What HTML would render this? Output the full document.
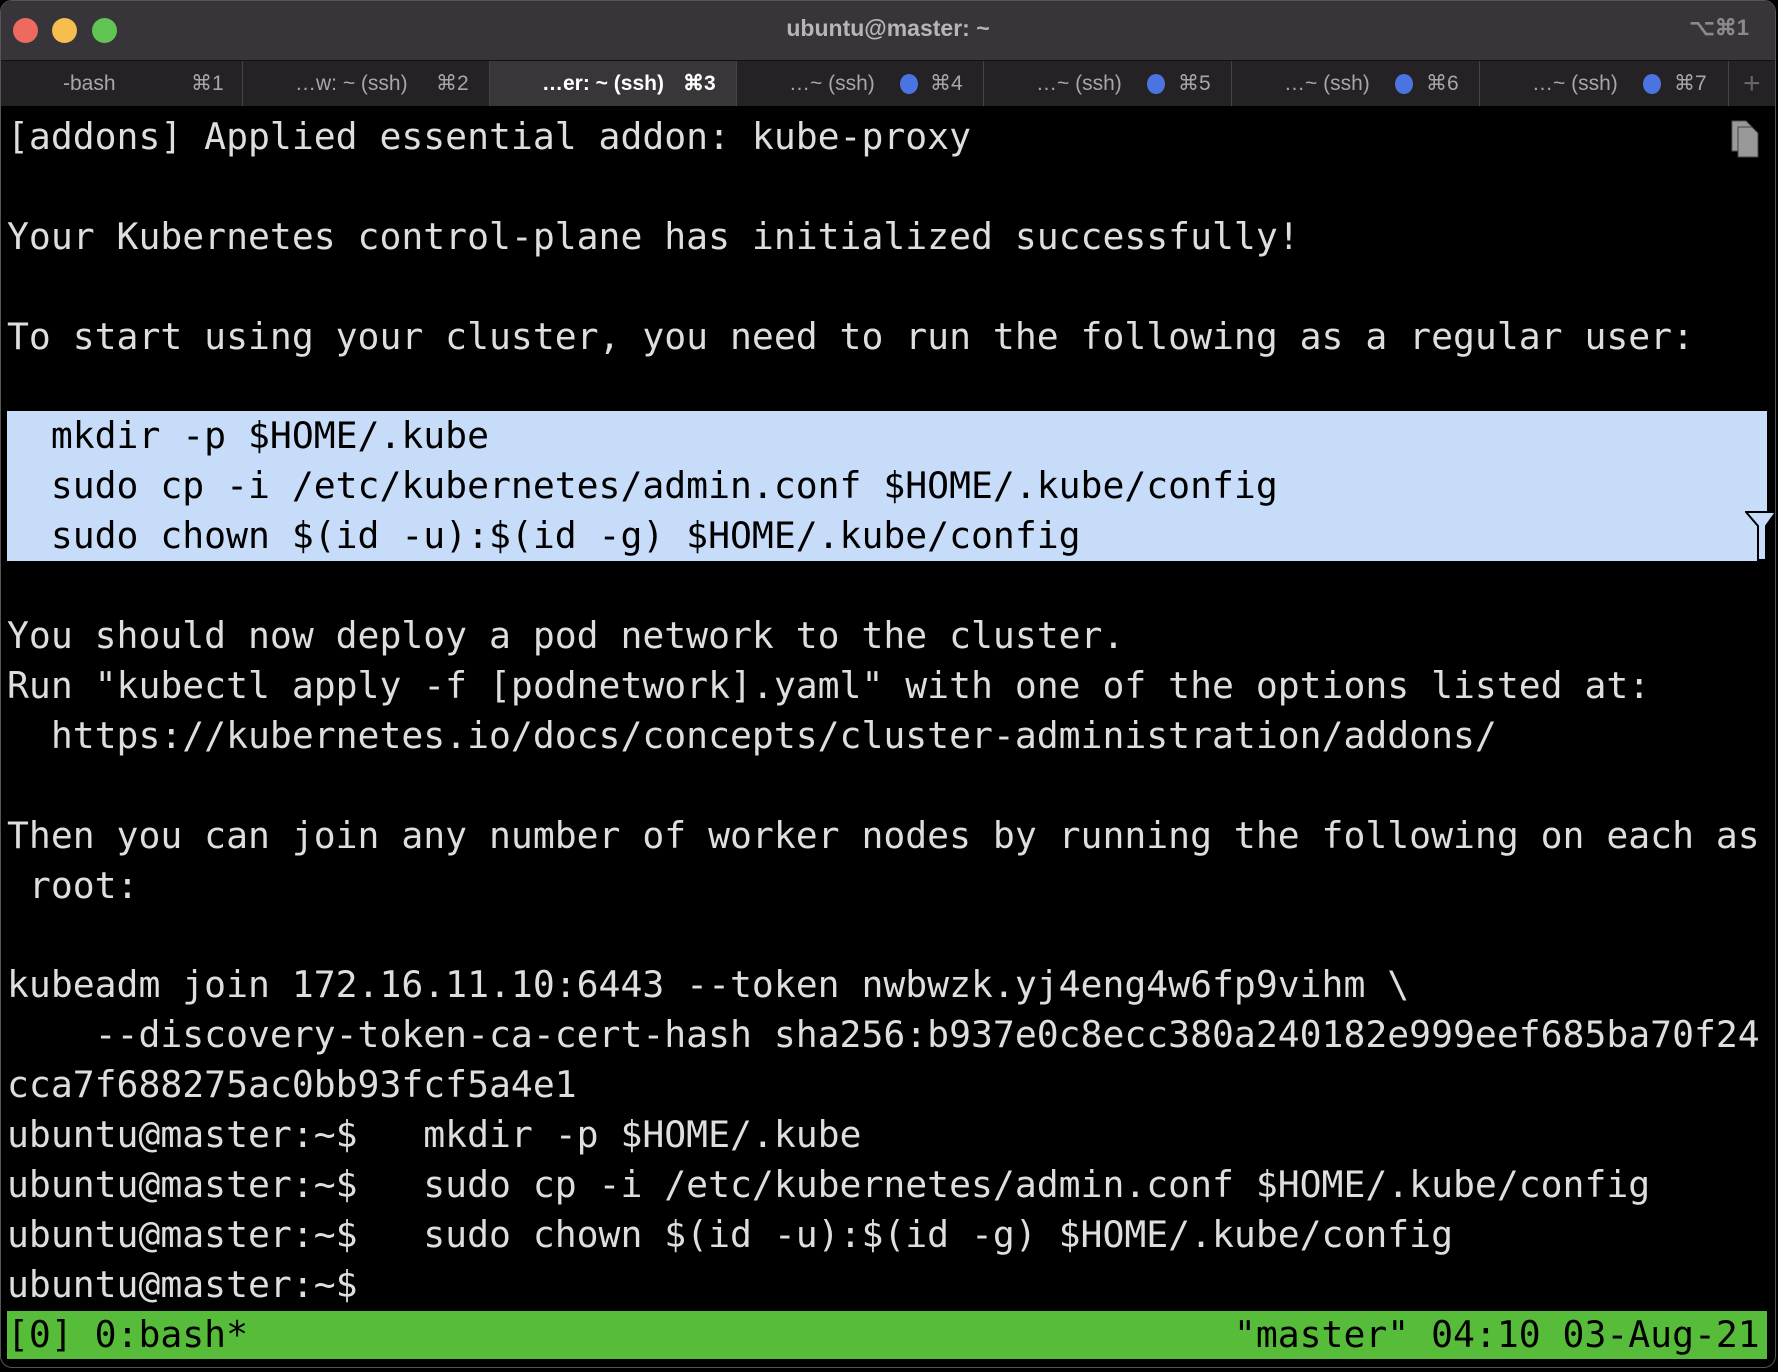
<!DOCTYPE html>
<html><head><meta charset="utf-8"><style>
html,body{margin:0;padding:0;width:1778px;height:1372px;background:#000;overflow:hidden}
.win{position:absolute;left:0;top:0;width:1774px;height:1366px;background:#000;border:1px solid #555;border-radius:12px;overflow:hidden}
.title{position:absolute;left:0;top:0;width:100%;height:59px;background:#38353a}
.dot{position:absolute;top:17px;width:25px;height:25px;border-radius:50%}
.ttext{position:absolute;left:0;width:100%;top:14px;text-align:center;font:bold 23px "Liberation Sans",sans-serif;color:#b8b5b9}
.kb{position:absolute;right:26px;top:14px;font:bold 22px "Liberation Sans",sans-serif;color:#8c898d}
.tabs{position:absolute;left:0;top:59px;width:100%;height:45px;background:#242225;border-top:1px solid #111}
.tab{position:absolute;top:0;height:45px;border-left:1px solid #444;font:21px "Liberation Sans",sans-serif;color:#a9a6aa;line-height:45px;box-sizing:border-box}
.tab.act{background:#39363a;color:#fff;font-weight:bold}
.tab span{position:absolute}
.bd{display:inline-block;width:18px;height:20px;border-radius:50%;background:#4a74e0;position:absolute;top:13px}
.term{position:absolute;left:6px;top:111px;font-family:"DejaVu Sans Mono","Liberation Mono",monospace;font-size:36.4px;line-height:49.9px;color:#dedede;white-space:pre;letter-spacing:0}
.hl{position:absolute;left:6px;top:410px;width:1760px;height:150px;background:#c6dcf8}
.status{position:absolute;left:6px;top:1310px;width:1760px;height:48px;background:#58bc3b}
</style></head><body>
<div class="win">
<div class="title">
<div class="dot" style="left:12px;background:#ee6a5f"></div>
<div class="dot" style="left:51px;background:#f5be4f"></div>
<div class="dot" style="left:91px;background:#61c554"></div>
<div class="ttext">ubuntu@master: ~</div>
<div class="kb">⌥⌘1</div>
</div>
<div class="tabs">
<div class="tab" style="left:0;width:241px;border-left:none"><span style="left:62px">-bash</span><span style="left:190px">⌘1</span></div>
<div class="tab" style="left:241px;width:247px"><span style="left:52px">…w: ~ (ssh)</span><span style="left:193px">⌘2</span></div>
<div class="tab act" style="left:488px;width:247px"><span style="left:52px">…er: ~ (ssh)</span><span style="left:193px">⌘3</span></div>
<div class="tab" style="left:735px;width:247px"><span style="left:52px">…~ (ssh)</span><i class="bd" style="left:163px"></i><span style="left:193px">⌘4</span></div>
<div class="tab" style="left:982px;width:248px"><span style="left:52px">…~ (ssh)</span><i class="bd" style="left:163px"></i><span style="left:194px">⌘5</span></div>
<div class="tab" style="left:1230px;width:248px"><span style="left:52px">…~ (ssh)</span><i class="bd" style="left:163px"></i><span style="left:194px">⌘6</span></div>
<div class="tab" style="left:1478px;width:249px"><span style="left:52px">…~ (ssh)</span><i class="bd" style="left:163px"></i><span style="left:194px">⌘7</span></div>
<div class="tab" style="left:1727px;width:50px;color:#666"><span style="left:14px;font-size:30px">+</span></div>
</div>
<div class="hl"></div>
<div class="status"></div>
<svg style="position:absolute;left:1730px;top:118px" width="32" height="40"><path d="M1 2h14l6 6v24H1z" fill="#999" stroke="#555"/><path d="M7 8h14l6 6v24H7z" fill="#999" stroke="#444"/></svg>
<svg style="position:absolute;left:1744px;top:510px" width="34" height="52"><path d="M1 1h30l-10 14v34h-8V15z" fill="#c6dcf8" stroke="#000" stroke-width="2"/></svg>
<div class="term">[addons] Applied essential addon: kube-proxy

Your Kubernetes control-plane has initialized successfully!

To start using your cluster, you need to run the following as a regular user:

<span style="color:#000">  mkdir -p $HOME/.kube
  sudo cp -i /etc/kubernetes/admin.conf $HOME/.kube/config
  sudo chown $(id -u):$(id -g) $HOME/.kube/config</span>

You should now deploy a pod network to the cluster.
Run "kubectl apply -f [podnetwork].yaml" with one of the options listed at:
  https://kubernetes.io/docs/concepts/cluster-administration/addons/

Then you can join any number of worker nodes by running the following on each as
 root:

kubeadm join 172.16.11.10:6443 --token nwbwzk.yj4eng4w6fp9vihm \
    --discovery-token-ca-cert-hash sha256:b937e0c8ecc380a240182e999eef685ba70f24
cca7f688275ac0bb93fcf5a4e1
ubuntu@master:~$   mkdir -p $HOME/.kube
ubuntu@master:~$   sudo cp -i /etc/kubernetes/admin.conf $HOME/.kube/config
ubuntu@master:~$   sudo chown $(id -u):$(id -g) $HOME/.kube/config
ubuntu@master:~$
<span style="color:#000">[0] 0:bash*                                             "master" 04:10 03-Aug-21</span></div>
</div>
</body></html>
